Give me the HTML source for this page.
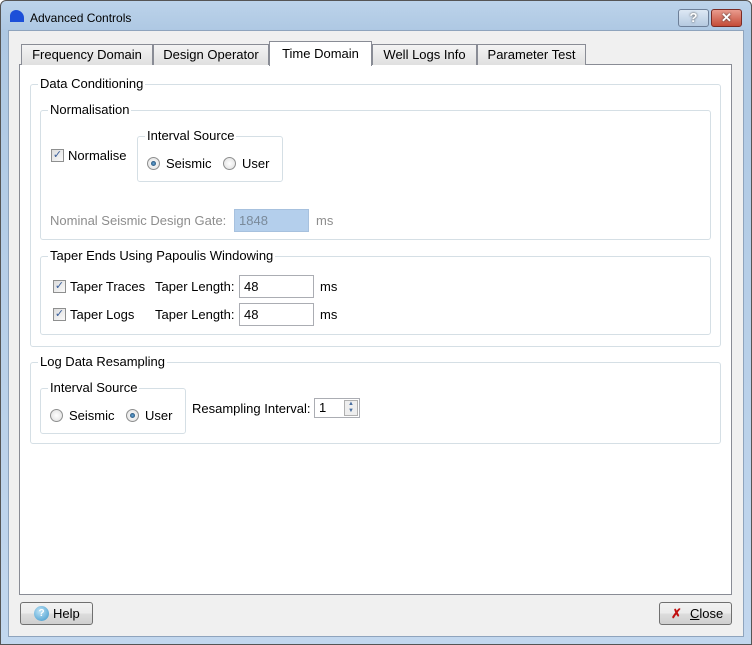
<!DOCTYPE html>
<html><head><style>
*{box-sizing:border-box;margin:0;padding:0}
body{width:752px;height:645px;background:#fff;font-family:"Liberation Sans",sans-serif;font-size:13px;color:#000;position:relative;overflow:hidden}
.a{position:absolute}
.win{left:0;top:0;width:752px;height:645px;background:linear-gradient(#bcd3ea,#aec8e3 30px,#c2d7ee);border:1px solid #555;border-radius:6px 6px 0 0}
.client{left:8px;top:30px;width:736px;height:607px;background:#f0f0f0;border:1px solid #8fa4bd}
.tab{top:44px;height:21px;background:linear-gradient(#f4f4f4,#e0e0e0);border:1px solid #898c95;border-bottom:none;text-align:center;line-height:19px}
.pane{left:19px;top:64px;width:713px;height:531px;background:#fff;border:1px solid #898c95}
.gb{border:1px solid #d5dfe5;border-radius:3px}
.lg{background:#fff;padding:0 2px;line-height:14px}
.cb{width:13px;height:13px;border:1px solid #8e8f8f;background:linear-gradient(135deg,#dcdcdc,#fafafa);font-size:11px;line-height:11px;text-align:center;color:#3a5f9a}
.rb{width:13px;height:13px;border-radius:50%;border:1px solid #8e8f8f;background:radial-gradient(#fff,#ddd)}
.rb.on::after{content:"";position:absolute;left:3px;top:3px;width:5px;height:5px;border-radius:50%;background:radial-gradient(#6ad,#135)}
.tb{height:23px;border:1px solid #abadb3;background:#fff;padding-left:4px;line-height:21px}
.btn{height:23px;border:1px solid #707070;border-radius:3px;background:linear-gradient(#f2f2f2,#ebebeb 50%,#dddddd 51%,#cfcfcf);line-height:21px}
</style></head><body>
<div class="a win"></div>
<div class="a" style="left:10px;top:10px;width:14px;height:12px;background:#1c4fd8;border-radius:6px 8px 0 0"></div>
<div class="a" style="left:30px;top:11px;font-size:12px">Advanced Controls</div>
<div class="a" style="left:678px;top:9px;width:31px;height:18px;border:1px solid #6d7f98;border-radius:3px;background:linear-gradient(#dde8f4,#b5c9e0);text-align:center;color:#fff;font-weight:bold;line-height:16px;text-shadow:0 0 2px #333">?</div>
<div class="a" style="left:711px;top:9px;width:31px;height:18px;border:1px solid #7b2b24;border-radius:3px;background:linear-gradient(#e99c8e,#c44c38);text-align:center;color:#fff;font-weight:bold;line-height:16px;text-shadow:0 0 2px #333">✕</div>
<div class="a client"></div>
<div class="a pane"></div>
<div class="a tab" style="left:21px;width:132px">Frequency Domain</div>
<div class="a tab" style="left:153px;width:116px">Design Operator</div>
<div class="a tab" style="left:372px;width:105px">Well Logs Info</div>
<div class="a tab" style="left:477px;width:109px">Parameter Test</div>
<div class="a tab" style="left:269px;top:41px;width:103px;height:25px;background:#fff;line-height:23px">Time Domain</div>

<div class="a gb" style="left:30px;top:84px;width:691px;height:263px"></div>
<div class="a lg" style="left:38px;top:77px">Data Conditioning</div>
<div class="a gb" style="left:40px;top:110px;width:671px;height:130px"></div>
<div class="a lg" style="left:48px;top:103px">Normalisation</div>
<div class="a cb" style="left:51px;top:149px">✓</div>
<div class="a" style="left:68px;top:148px">Normalise</div>
<div class="a gb" style="left:137px;top:136px;width:146px;height:46px"></div>
<div class="a lg" style="left:145px;top:129px">Interval Source</div>
<div class="a rb on" style="left:147px;top:157px"></div>
<div class="a" style="left:166px;top:156px">Seismic</div>
<div class="a rb" style="left:223px;top:157px"></div>
<div class="a" style="left:242px;top:156px">User</div>
<div class="a" style="left:50px;top:213px;color:#8d8d8d">Nominal Seismic Design Gate:</div>
<div class="a" style="left:234px;top:209px;width:75px;height:23px;background:#b4cfec;border:1px solid #a7c1de;color:#7a8a9a;padding-left:4px;line-height:21px">1848</div>
<div class="a" style="left:316px;top:213px;color:#8d8d8d">ms</div>

<div class="a gb" style="left:40px;top:256px;width:671px;height:79px"></div>
<div class="a lg" style="left:48px;top:249px">Taper Ends Using Papoulis Windowing</div>
<div class="a cb" style="left:53px;top:280px">✓</div>
<div class="a" style="left:70px;top:279px">Taper Traces</div>
<div class="a" style="left:155px;top:279px">Taper Length:</div>
<div class="a tb" style="left:239px;top:275px;width:75px">48</div>
<div class="a" style="left:320px;top:279px">ms</div>
<div class="a cb" style="left:53px;top:308px">✓</div>
<div class="a" style="left:70px;top:307px">Taper Logs</div>
<div class="a" style="left:155px;top:307px">Taper Length:</div>
<div class="a tb" style="left:239px;top:303px;width:75px">48</div>
<div class="a" style="left:320px;top:307px">ms</div>

<div class="a gb" style="left:30px;top:362px;width:691px;height:82px"></div>
<div class="a lg" style="left:38px;top:355px">Log Data Resampling</div>
<div class="a gb" style="left:40px;top:388px;width:146px;height:46px"></div>
<div class="a lg" style="left:48px;top:381px">Interval Source</div>
<div class="a rb" style="left:50px;top:409px"></div>
<div class="a" style="left:69px;top:408px">Seismic</div>
<div class="a rb on" style="left:126px;top:409px"></div>
<div class="a" style="left:145px;top:408px">User</div>
<div class="a" style="left:192px;top:401px">Resampling Interval:</div>
<div class="a tb" style="left:314px;top:398px;width:46px;height:20px;line-height:18px">1</div>
<div class="a" style="left:344px;top:400px;width:14px;height:16px;border:1px solid #b0b0b0;background:#eee;font-size:6px;line-height:7px;text-align:center;color:#4a6fa0">▲<br>▼</div>

<div class="a btn" style="left:20px;top:602px;width:73px"><span class="a" style="left:13px;top:3px;width:15px;height:15px;border-radius:50%;background:radial-gradient(circle at 40% 35%,#bfe4f7,#3a94c9);color:#fff;font-size:10px;line-height:15px;text-align:center;font-weight:bold">?</span><span class="a" style="left:32px;top:0">Help</span></div>
<div class="a btn" style="left:659px;top:602px;width:73px"><span class="a" style="left:11px;top:0;color:#c01010;font-weight:bold">✗</span><span class="a" style="left:30px;top:0"><u>C</u>lose</span></div>
</body></html>
